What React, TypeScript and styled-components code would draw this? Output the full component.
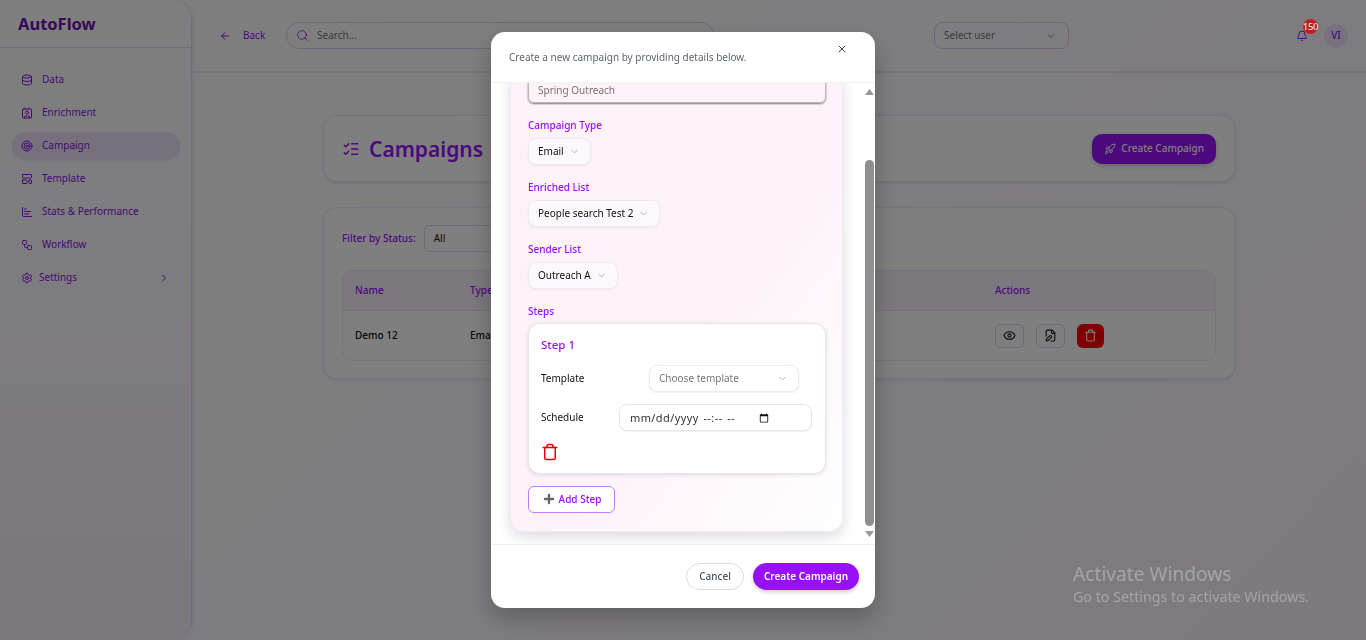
import React from 'react';
import styled, { createGlobalStyle } from 'styled-components';
import {
  ArrowLeft,
  Bell,
  ChartBar,
  ChevronDown,
  ChevronRight,
  Contact,
  Database,
  Eye,
  FilePen,
  LayoutTemplate,
  ListChecks,
  Plus,
  Rocket,
  Search,
  Settings,
  Target,
  Trash,
  Workflow,
  X,
} from 'lucide-react';

const navItems = [
  { label: 'Data', icon: Database },
  { label: 'Enrichment', icon: Contact },
  { label: 'Campaign', icon: Target, active: true },
  { label: 'Template', icon: LayoutTemplate },
  { label: 'Stats & Performance', icon: ChartBar },
  { label: 'Workflow', icon: Workflow },
];

export default function App() {
  return (
    <Shell>
      <GlobalStyle />
      <Sidebar>
        <Logo>AutoFlow</Logo>
        <Nav>
          {navItems.map((item) => (
            <NavItem key={item.label} $active={item.active}>
              <item.icon size={12} />
              <span>{item.label}</span>
            </NavItem>
          ))}
          <SettingsItem>
            <Settings size={12} />
            <span>Settings</span>
            <ChevronRight size={12} />
          </SettingsItem>
        </Nav>
      </Sidebar>

      <Content>
        <Header>
          <BackLink>
            <ArrowLeft size={12} />
            <span>Back</span>
          </BackLink>
          <SearchBox>
            <Search size={13} strokeWidth={1.5} />
            <span>Search...</span>
          </SearchBox>
          <UserSelect>
            <span>Select user</span>
            <ChevronDown size={12} />
          </UserSelect>
          <BellWrap>
            <Bell size={12} />
            <Badge>150</Badge>
          </BellWrap>
          <Avatar>VI</Avatar>
        </Header>

        <Main>
          <TitleCard>
            <PageTitle>
              <ListChecks size={18} />
              <h1>Campaigns</h1>
            </PageTitle>
            <PrimaryButton>
              <Rocket size={12} />
              Create Campaign
            </PrimaryButton>
          </TitleCard>

          <TableCard>
            <FilterRow>
              <label>Filter by Status:</label>
              <FilterSelect>All</FilterSelect>
            </FilterRow>
            <Table>
              <HeadRow>
                <span>Name</span>
                <span>Type</span>
                <span />
                <span>Actions</span>
              </HeadRow>
              <BodyRow>
                <span>Demo 12</span>
                <span>Email</span>
                <span />
                <Actions>
                  <IconButton>
                    <Eye size={13} />
                  </IconButton>
                  <IconButton>
                    <FilePen size={13} />
                  </IconButton>
                  <DangerButton>
                    <Trash size={13} />
                  </DangerButton>
                </Actions>
              </BodyRow>
            </Table>
          </TableCard>
        </Main>
      </Content>

      <Overlay>
        <Modal>
          <ModalHeader>
            <p>Create a new campaign by providing details below.</p>
            <CloseButton>
              <X size={12} />
            </CloseButton>
          </ModalHeader>

          <ModalBody>
            <ScrollPane>
              <FormCard>
                <NameInput placeholder="Spring Outreach" />
                <Field>
                  <FieldLabel>Campaign Type</FieldLabel>
                  <Select>
                    <span>Email</span>
                    <ChevronDown size={11} />
                  </Select>
                </Field>
                <Field>
                  <FieldLabel>Enriched List</FieldLabel>
                  <Select>
                    <span>People search Test 2</span>
                    <ChevronDown size={11} />
                  </Select>
                </Field>
                <Field>
                  <FieldLabel>Sender List</FieldLabel>
                  <Select>
                    <span>Outreach A</span>
                    <ChevronDown size={11} />
                  </Select>
                </Field>
                <Field>
                  <FieldLabel>Steps</FieldLabel>
                  <StepCard>
                    <StepTitle>Step 1</StepTitle>
                    <StepRow>
                      <label>Template</label>
                      <TemplateSelect>
                        <span>Choose template</span>
                        <ChevronDown size={11} />
                      </TemplateSelect>
                    </StepRow>
                    <StepRow>
                      <label>Schedule</label>
                      <DateField>
                        <span>mm/dd/yyyy --:-- --</span>
                        <svg width="10" height="10" viewBox="0 0 24 24" fill="currentColor">
                          <path d="M20 3h-1V1h-2v2H7V1H5v2H4c-1.1 0-2 .9-2 2v16c0 1.1.9 2 2 2h16c1.1 0 2-.9 2-2V5c0-1.1-.9-2-2-2zm0 18H4V8h16v13z" />
                        </svg>
                      </DateField>
                    </StepRow>
                    <StepDelete>
                      <Trash size={18} />
                    </StepDelete>
                  </StepCard>
                </Field>
                <AddStepButton>
                  <Plus size={14} strokeWidth={4} />
                  Add Step
                </AddStepButton>
              </FormCard>
            </ScrollPane>
            <ScrollBar>
              <svg width="9" height="6" viewBox="0 0 9 6" fill="#999">
                <path d="M4.5 0L9 6H0z" />
              </svg>
              <ScrollThumb />
              <svg width="9" height="6" viewBox="0 0 9 6" fill="#999">
                <path d="M0 0H9L4.5 6z" />
              </svg>
            </ScrollBar>
          </ModalBody>

          <ModalFooter>
            <CancelButton>Cancel</CancelButton>
            <SubmitButton>Create Campaign</SubmitButton>
          </ModalFooter>
        </Modal>
      </Overlay>

      <Watermark>
        <strong>Activate Windows</strong>
        <span>Go to Settings to activate Windows.</span>
      </Watermark>
    </Shell>
  );
}

const primary = '#9810fa';

const GlobalStyle = createGlobalStyle`
  * {
    box-sizing: border-box;
  }

  html,
  body {
    margin: 0;
    height: 100%;
    overflow: hidden;
  }

  body {
    font-family: 'Noto Sans', 'Open Sans', sans-serif;
    font-size: 10px;
    line-height: 15px;
    color: #111;
  }
`;

const Shell = styled.div`
  display: flex;
  height: 100vh;
  background: linear-gradient(135deg, #ffffff, #faf5ff);
`;

const Sidebar = styled.aside`
  width: 192px;
  flex-shrink: 0;
  display: flex;
  flex-direction: column;
  border-right: 1px solid #e9d5ff;
  border-radius: 0 20px 20px 0;
  background: linear-gradient(180deg, #ffffff, #f6f0fd);
  box-shadow: 1px 0 4px rgba(88, 28, 135, 0.1);
`;

const Logo = styled.div`
  height: 48px;
  padding: 12px 18px 0;
  border-bottom: 1px solid #e9d5ff;
  font-size: 16.5px;
  line-height: 24px;
  font-weight: 700;
  color: #6e11b0;
`;

const Nav = styled.nav`
  display: flex;
  flex-direction: column;
  gap: 6px;
  padding: 18px 11px 0 12px;
`;

const NavItem = styled.div<{ $active?: boolean }>`
  height: 27px;
  display: flex;
  align-items: center;
  gap: 9px;
  padding-left: 9px;
  border-radius: 14px;
  color: #8a12e6;
  background: ${(p) => (p.$active ? '#ede2fb' : 'transparent')};
  box-shadow: ${(p) => (p.$active ? '0 1px 3px rgba(88, 28, 135, 0.12)' : 'none')};
`;

const SettingsItem = styled(NavItem)`
  gap: 6px;

  svg:last-child {
    margin-left: auto;
    margin-right: 10px;
  }
`;

const Content = styled.div`
  flex: 1;
  min-width: 0;
  display: flex;
  flex-direction: column;
`;

const Header = styled.header`
  height: 73px;
  flex-shrink: 0;
  display: flex;
  align-items: center;
  padding: 0 18px 0 27px;
  border-bottom: 2px solid #ece2f8;
  color: ${primary};
`;

const BackLink = styled.div`
  display: flex;
  align-items: center;
  gap: 12px;
  width: 67px;
`;

const SearchBox = styled.div`
  width: 428px;
  height: 27px;
  display: flex;
  align-items: center;
  gap: 8px;
  padding-left: 9px;
  border: 1px solid #e0c8fb;
  border-radius: 14px;

  span {
    color: #777;
  }
`;

const UserSelect = styled.div`
  width: 135px;
  height: 27px;
  margin-left: 220px;
  display: flex;
  align-items: center;
  justify-content: space-between;
  padding: 0 11px 0 9px;
  border: 1px solid #e0c8fb;
  border-radius: 8px;
  color: #777;

  svg {
    color: #888;
  }
`;

const BellWrap = styled.div`
  position: relative;
  display: flex;
  margin-left: auto;
  margin-right: 16px;
`;

const Badge = styled.span`
  position: absolute;
  z-index: 60;
  top: -11px;
  left: 7px;
  width: 15px;
  height: 15px;
  display: flex;
  align-items: center;
  justify-content: center;
  border-radius: 50%;
  background: #c01f1f;
  color: #e6e6e6;
  font-size: 9.5px;
  letter-spacing: -0.3px;
  font-weight: 500;
`;

const Avatar = styled.div`
  width: 24px;
  height: 24px;
  display: flex;
  align-items: center;
  justify-content: center;
  border-radius: 50%;
  background: #f0e4fd;
  font-weight: 500;
`;

const Main = styled.main`
  flex: 1;
  display: flex;
  flex-direction: column;
  align-items: center;
  gap: 25px;
  padding-top: 42px;
`;

const Card = styled.section`
  width: 912px;
  background: #fff;
  border: 1px solid #efe6fa;
  border-radius: 14px;
  box-shadow: 0 1px 3px rgba(88, 28, 135, 0.14);
`;

const TitleCard = styled(Card)`
  height: 67px;
  display: flex;
  align-items: center;
  justify-content: space-between;
  padding: 0 18px;
`;

const PageTitle = styled.div`
  display: flex;
  align-items: center;
  gap: 9px;
  color: ${primary};

  h1 {
    margin: 0;
    font-size: 21px;
    line-height: 28px;
    font-weight: 600;
  }
`;

const PrimaryButton = styled.button`
  height: 30px;
  display: flex;
  align-items: center;
  gap: 5px;
  padding: 0 12px;
  border: 0;
  border-radius: 10px;
  background: ${primary};
  color: #fff;
  font: inherit;
  font-weight: 500;
  box-shadow: 0 2px 5px rgba(0, 0, 0, 0.2);
`;

const TableCard = styled(Card)`
  height: 172px;
  padding: 17px 18px;
`;

const FilterRow = styled.div`
  height: 27px;
  display: flex;
  align-items: center;
  gap: 8px;
  margin-bottom: 18px;

  label {
    color: ${primary};
    font-weight: 500;
  }
`;

const FilterSelect = styled.div`
  width: 150px;
  height: 27px;
  display: flex;
  align-items: center;
  padding-left: 9px;
  border: 1px solid #ddd0f0;
  border-radius: 6px;
`;

const Table = styled.div`
  border: 1px solid #efe6fa;
  border-radius: 10px;
  overflow: hidden;
`;

const HeadRow = styled.div`
  height: 40px;
  display: grid;
  grid-template-columns: 115px 1fr 0 208px;
  align-items: center;
  padding: 0 12px;
  background: #f6f0fd;
  border-bottom: 1px solid #efe6fa;
  color: ${primary};
  font-weight: 500;
`;

const BodyRow = styled(HeadRow)`
  height: 49px;
  background: transparent;
  border-bottom: 0;
  color: #111;
`;

const Actions = styled.div`
  display: flex;
  gap: 12px;
`;

const IconButton = styled.button`
  width: 29px;
  height: 24px;
  display: flex;
  align-items: center;
  justify-content: center;
  padding: 0;
  border: 1px solid #dfc9fa;
  border-radius: 6px;
  background: #fff;
  color: #111;
`;

const DangerButton = styled(IconButton)`
  width: 27px;
  border: 0;
  background: #ff0000;
  color: #fff;
`;

const Overlay = styled.div`
  position: fixed;
  z-index: 50;
  inset: 0;
  display: flex;
  align-items: center;
  justify-content: center;
  background: rgba(0, 0, 0, 0.5);
`;

const Modal = styled.div`
  width: 384px;
  height: 576px;
  display: flex;
  flex-direction: column;
  overflow: hidden;
  background: #fff;
  border-radius: 14px;
  box-shadow: 0 10px 25px rgba(0, 0, 0, 0.25);
`;

const ModalHeader = styled.div`
  position: relative;
  height: 51px;
  flex-shrink: 0;
  display: flex;
  align-items: flex-end;
  padding: 0 18px 17px;
  border-bottom: 1px solid #f0f0f2;

  p {
    margin: 0;
    color: #5f6672;
  }
`;

const CloseButton = styled.div`
  position: absolute;
  top: 11px;
  right: 27px;
  display: flex;
  color: #444;
`;

const ModalBody = styled.div`
  flex: 1;
  min-height: 0;
  display: flex;
`;

const ScrollPane = styled.div`
  flex: 1;
  min-width: 0;
  overflow: hidden;
  padding-left: 19px;
  padding-right: 21px;
`;

const ScrollBar = styled.div`
  width: 11px;
  flex-shrink: 0;
  display: flex;
  flex-direction: column;
  align-items: center;
  padding: 6px 0 7px;
`;

const ScrollThumb = styled.div`
  flex: 1;
  width: 9px;
  margin: 65px 0 5px;
  border-radius: 5px;
  background: #8f8f8f;
`;

const FormCard = styled.form`
  display: flex;
  flex-direction: column;
  gap: 15px;
  margin-top: -7px;
  padding: 0 17px 18px;
  border: 1px solid #f3e8ff;
  border-top: 0;
  border-radius: 0 0 14px 14px;
  background: linear-gradient(to bottom right, #fdf2f8 55%, #ffffff);
  box-shadow: 0 5px 14px rgba(0, 0, 0, 0.14);
`;

const Field = styled.div`
  display: flex;
  flex-direction: column;
  align-items: flex-start;
  gap: 5px;
`;

const FieldLabel = styled.label`
  color: ${primary};
  font-weight: 500;
`;

const NameInput = styled.input`
  width: 298px;
  height: 27px;
  flex-shrink: 0;
  padding: 0 9px;
  border: 1px solid #b8b8bc;
  border-radius: 6px;
  background: transparent;
  box-shadow: 0 1px 2px rgba(0, 0, 0, 0.5);
  font: inherit;

  &::placeholder {
    color: #777;
  }
`;

const Select = styled.div`
  height: 27px;
  display: inline-flex;
  align-items: center;
  gap: 5px;
  padding: 0 10px 0 9px;
  border: 1px solid #ececf0;
  border-radius: 8px;
  background: #fdf8fc;
  box-shadow: 0 1px 2px rgba(0, 0, 0, 0.06);

  svg {
    color: #aaa;
  }
`;

const StepCard = styled.div`
  width: 298px;
  display: flex;
  flex-direction: column;
  margin-top: -1px;
  padding: 13px 13px 11px 12px;
  background: #fff;
  border: 1px solid #e6e6ea;
  border-radius: 12px;
  box-shadow: 0 1px 4px rgba(0, 0, 0, 0.12);
`;

const StepTitle = styled.div`
  color: ${primary};
  font-size: 11.5px;
  font-weight: 500;
  margin-bottom: 13px;
`;

const StepRow = styled.div`
  display: flex;
  align-items: center;
  justify-content: space-between;
  margin-bottom: 12px;
`;

const TemplateSelect = styled(Select)`
  width: 150px;
  justify-content: space-between;
  margin-right: 13px;
  background: #fff;
  color: #777;
`;

const DateField = styled.div`
  width: 193px;
  height: 27px;
  display: flex;
  align-items: center;
  justify-content: space-between;
  padding: 0 42px 0 10px;
  border: 1px solid #e6e6ea;
  border-radius: 8px;
  font-size: 11px;
  letter-spacing: 0.4px;
  word-spacing: 1.5px;
  color: #333;
  box-shadow: 0 1px 2px rgba(0, 0, 0, 0.06);

  svg {
    color: #111;
  }
`;

const StepDelete = styled.div`
  display: flex;
  margin-bottom: 1px;
  color: #e7000b;
`;

const AddStepButton = styled.button`
  width: 87px;
  height: 27px;
  display: flex;
  align-items: center;
  justify-content: center;
  gap: 3px;
  margin-top: -3.5px;
  padding: 0;
  border: 1px solid #c27aff;
  border-radius: 6px;
  background: #fff;
  color: ${primary};
  font: inherit;
  font-weight: 500;

  svg {
    color: #666;
  }
`;

const ModalFooter = styled.div`
  height: 64px;
  flex-shrink: 0;
  display: flex;
  justify-content: flex-end;
  align-items: center;
  gap: 9px;
  padding: 0 16px;
  border-top: 1px solid #f0f0f2;
`;

const CancelButton = styled.button`
  width: 58px;
  height: 27px;
  padding: 0;
  border: 1px solid #d8dbe3;
  border-radius: 14px;
  background: #fff;
  color: #4a5565;
  font: inherit;
  font-weight: 500;
`;

const SubmitButton = styled.button`
  width: 106px;
  height: 27px;
  padding: 0;
  border: 0;
  border-radius: 14px;
  background: ${primary};
  color: #fff;
  font: inherit;
  font-weight: 600;
  box-shadow: 0 2px 4px rgba(0, 0, 0, 0.2);
`;

const Watermark = styled.div`
  position: fixed;
  z-index: 70;
  left: 1073px;
  top: 561px;
  display: flex;
  flex-direction: column;
  gap: 0;
  color: rgba(255, 255, 255, 0.3);
  font-size: 14.25px;
  line-height: 20px;

  strong {
    font-size: 19.2px;
    line-height: 26px;
    font-weight: 400;
  }
`;
